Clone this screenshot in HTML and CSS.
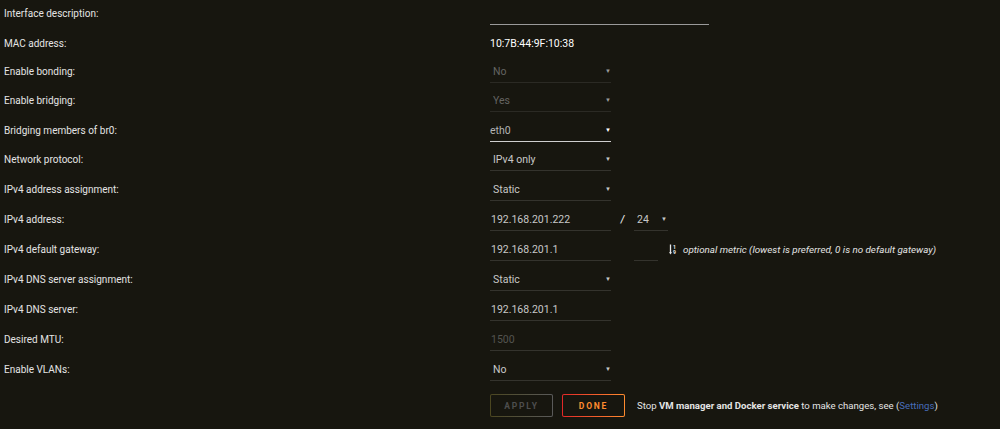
FILE: index.html
```html
<!DOCTYPE html>
<html lang="en">
<head>
    <meta charset="UTF-8">
    <meta name="viewport" content="width=device-width, initial-scale=1.0">
    <title>Interface eth0</title>
    <link rel="stylesheet" href="styles.css">
</head>
<body>
    <form class="settings">
        <div class="row">
            <label>Interface description:</label>
            <input type="text" class="field desc">
        </div>
        <div class="row gap2">
            <label>MAC address:</label>
            <span class="mac">10:7B:44:9F:10:38</span>
        </div>
        <div class="row gap3">
            <label>Enable bonding:</label>
            <span class="select off"><select disabled><option>No</option></select></span>
        </div>
        <div class="row">
            <label>Enable bridging:</label>
            <span class="select off"><select disabled><option>Yes</option></select></span>
        </div>
        <div class="row gap3">
            <label>Bridging members of br0:</label>
            <span class="select focus"><select><option>eth0</option></select></span>
        </div>
        <div class="row">
            <label>Network protocol:</label>
            <span class="select"><select><option>IPv4 only</option></select></span>
        </div>
        <div class="row">
            <label>IPv4 address assignment:</label>
            <span class="select"><select><option>Static</option></select></span>
        </div>
        <div class="row">
            <label>IPv4 address:</label>
            <input type="text" class="field" value="192.168.201.222">
            <span class="slash">/</span>
            <span class="select mask"><select><option>24</option></select></span>
        </div>
        <div class="row">
            <label>IPv4 default gateway:</label>
            <input type="text" class="field" value="192.168.201.1">
            <input type="text" class="field metric">
            <span class="hint">
                <svg class="sort" width="8" height="11" viewBox="0 0 8 11">
                    <path d="M1.5 0.5v8.5" stroke="#e8e8e8" stroke-width="1.3"/>
                    <path d="M0 8.2h3l-1.5 2.3z" fill="#e8e8e8"/>
                    <text x="4" y="4.6" font-size="5.2" font-weight="bold" fill="#e8e8e8">1</text>
                    <text x="4" y="10.4" font-size="5.2" font-weight="bold" fill="#e8e8e8">9</text>
                </svg>
                <em>optional metric (lowest is preferred, 0 is no default gateway)</em>
            </span>
        </div>
        <div class="row">
            <label>IPv4 DNS server assignment:</label>
            <span class="select"><select><option>Static</option></select></span>
        </div>
        <div class="row">
            <label>IPv4 DNS server:</label>
            <input type="text" class="field" value="192.168.201.1">
        </div>
        <div class="row">
            <label>Desired MTU:</label>
            <input type="text" class="field" placeholder="1500" disabled>
        </div>
        <div class="row">
            <label>Enable VLANs:</label>
            <span class="select"><select><option>No</option></select></span>
        </div>

        <div class="actions">
            <button type="button" class="btn" disabled>Apply</button>
            <button type="button" class="btn done">Done</button>
            <span class="note">Stop <b>VM manager and Docker service</b> to make changes, see (<a href="#">Settings</a>)</span>
        </div>
    </form>
</body>
</html>
```

FILE: styles.css
```css
body {
    margin: 0;
    background-color: #17160f;
    color: #e4e4e4;
    font-family: Roboto, "Liberation Sans", sans-serif;
    font-size: 10px;
}
.settings {
    padding: 0 4px;
}
.row {
    display: flex;
    align-items: flex-start;
    height: 26px;
    margin-bottom: 4px;
}
.row.gap2 {
    margin-bottom: 2px;
}
.row.gap3 {
    margin-bottom: 3px;
}
label {
    width: 486px;
    flex: none;
    line-height: 27px;
}
.mac {
    line-height: 27px;
    color: #fff;
    font-size: 10.5px;
}
.field, select {
    box-sizing: border-box;
    height: 25px;
    width: 121px;
    padding: 3px 1px 0;
    background: transparent;
    border: 0;
    border-bottom: 1px solid #34332d;
    color: #c8c8c8;
    font: inherit;
    font-size: 10.5px;
    outline: none;
}
.field.desc {
    width: 219px;
    border-bottom-color: #9a9a9a;
}
.field:disabled::placeholder {
    color: #545450;
}
.field.metric {
    width: 24px;
    margin-left: 23px;
}
select {
    appearance: none;
    -webkit-appearance: none;
    padding-left: 3px;
    color: #c8c8c8;
}
.select {
    position: relative;
}
.select::after {
    content: "\25BC";
    position: absolute;
    right: 0;
    top: 9px;
    font-size: 6px;
    color: #c8c8c8;
}
.select.off select {
    color: #858585;
}
.select.off::after {
    color: #9a9a9a;
}
.select.focus select {
    border-bottom-color: #cfcfcf;
    color: #b4b4b4;
    padding-left: 0;
}
.select.focus::after {
    color: #fff;
}
.select.mask select {
    width: 34px;
}
.select.mask::after {
    right: 1px;
}
.slash {
    line-height: 27px;
    width: 23px;
    text-align: center;
    color: #ddd;
    font-weight: bold;
    font-style: italic;
}
.hint {
    display: flex;
    align-items: center;
    height: 27px;
    margin-left: 11px;
    color: #e4e4e4;
}
.sort {
    margin-right: 6px;
}
.hint em {
    font-size: 9.8px;
}
.actions {
    display: flex;
    align-items: center;
    margin-top: 12px;
    padding-left: 486px;
}
.btn {
    height: 23px;
    width: 63px;
    margin-right: 9px;
    border: 1px solid transparent;
    border-radius: 2px;
    background: linear-gradient(#17160f, #17160f) padding-box,
                linear-gradient(90deg, #4b4620, #5a5a5a) border-box;
    color: #4e4e4e;
    font-family: inherit;
    font-size: 8.5px;
    font-weight: bold;
    letter-spacing: 1.8px;
    text-transform: uppercase;
}
.btn.done {
    background: linear-gradient(#17160f, #17160f) padding-box,
                linear-gradient(90deg, #e22828, #ff8c2f) border-box;
    color: #ff8c2f;
    cursor: pointer;
}
.note {
    margin-left: 3px;
    color: #e4e4e4;
    font-size: 9.6px;
}
.note a {
    color: #486dba;
    text-decoration: none;
}
```
